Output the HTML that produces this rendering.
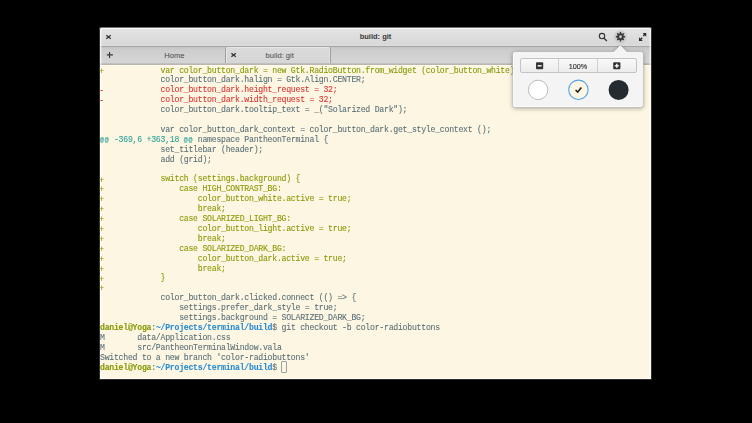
<!DOCTYPE html>
<html><head><meta charset="utf-8">
<style>
*{margin:0;padding:0;box-sizing:border-box}
html,body{width:752px;height:423px;background:#000;overflow:hidden}
body{position:relative;font-family:"Liberation Sans",sans-serif}
.a{position:absolute}
#win{left:99px;top:27px;width:553px;height:353px;background:#2e2e2e;border-radius:2.5px 2.5px 0 0;box-shadow:inset 0 1px 0 #6e6e6e}
#hdr{left:100px;top:28px;width:551px;height:18px;background:linear-gradient(#fbfbfb 0,#fbfbfb 1px,#e3e3e3 1px,#d8d8d8 16px,#dcdcdc 17px,#dcdcdc);border-radius:1.5px 1.5px 0 0}
#hline{left:100px;top:46px;width:551px;height:1px;background:#a6a6a6}
#tabs{left:100px;top:47px;width:551px;height:16px;background:linear-gradient(#c4c4c4,#cdcdcd 3px,#d1d1d1 8px,#d5d5d5)}
#tline{left:100px;top:63px;width:551px;height:2px;background:linear-gradient(#c0c0c0 0,#c0c0c0 1px,#b9b6ab 1px)}
#term{left:100px;top:65px;width:551px;height:314px;background:#fdf6e3;border-top:1px solid #fffbee}
#title{left:100px;top:27.2px;width:551px;text-align:center;font-weight:bold;font-size:7.5px;line-height:19px;color:#383838}
.tablabel{font-size:7.6px;color:#484848;line-height:16px;top:47.8px;white-space:pre}
#acttab{left:225px;top:47px;width:106px;height:16px;background:linear-gradient(#dadada,#d6d6d6);border-left:1px solid #a0a0a0;border-right:1px solid #a0a0a0;border-radius:2px 2px 0 0;box-shadow:inset 1px 1px 0 #e6e6e6,inset -1px 0 0 #e2e2e2}
#txt{left:100.3px;top:0;will-change:transform;font-family:"Liberation Mono",monospace;font-size:8.2px;letter-spacing:-0.258px;-webkit-text-stroke:0.08px;white-space:pre;color:#586e75}
.l{position:absolute;left:0;height:10px;line-height:10px}
.g{color:#859900}.r{color:#dc322f}.c{color:#2aa198}.b{color:#268bd2}.B{font-weight:bold}.pm{position:relative;left:-0.8px;top:1.2px}.mm{position:relative;left:-0.8px;top:0.6px}.at{font-size:6.6px;letter-spacing:0.695px;vertical-align:0.3px}
#cur{position:absolute;left:281px;top:361px;width:6px;height:12px;border:1px solid #9aa3a0;border-radius:1px}
#pop{left:513px;top:51px;width:131px;height:57px;background:#f5f5f5;border:1px solid #bdbdbd;border-radius:3px;box-shadow:0 1px 3px rgba(0,0,0,.25)}
#zbtn{left:520px;top:58px;width:117px;height:15px;border:1px solid #c4c4c4;border-radius:2px;background:linear-gradient(#f9f9f9,#ececec)}
.zdiv{top:59px;width:1px;height:13px;background:#cfcfcf}
#pct{left:559px;top:58.5px;width:38px;text-align:center;line-height:15px;font-size:7.3px;color:#262626;-webkit-text-stroke:0.1px #262626}
.circ{top:80px;width:20px;height:20px;border-radius:50%}
#hl{left:100px;top:28px;width:551px;height:351px;border-radius:1.5px 1.5px 0 0;box-shadow:inset 1px 0 0 rgba(255,255,255,.6),inset -1px 0 0 rgba(255,255,255,.6),inset 0 -1px 0 rgba(255,255,255,.7),inset 2px 0 0 rgba(255,255,255,.25),inset -2px 0 0 rgba(255,255,255,.25)}
</style></head><body>
<div class="a" id="win"></div>
<div class="a" id="hdr"></div>
<div class="a" id="hline"></div>
<div class="a" id="tabs"></div>
<div class="a" id="acttab"></div>
<div class="a" id="tline"></div>
<div class="a" id="term"></div>
<div class="a" id="hl"></div>
<div class="a" id="title">build: git</div>
<div class="a tablabel" style="left:164.3px">Home</div>
<div class="a tablabel" style="left:265.6px">build: git</div>
<svg class="a" style="left:100px;top:27px" width="551" height="37" viewBox="0 0 551 37">
  <path d="M6.3 8.2 L10.7 11.8 M10.7 8.2 L6.3 11.8" stroke="#333" stroke-width="1.25" fill="none"/>
  <rect x="9" y="25" width="1.1" height="6" fill="#333"/><rect x="6.8" y="27.2" width="6.1" height="1.3" fill="#3a3a3a"/>
  <path d="M131.4 26.2 L135.8 29.8 M135.8 26.2 L131.4 29.8" stroke="#333" stroke-width="1.25" fill="none"/>
  <circle cx="502" cy="9.1" r="2.7" stroke="#333" stroke-width="1.1" fill="none"/>
  <path d="M504 11.2 L506.9 13.9" stroke="#333" stroke-width="1.3"/>
  <circle cx="520.5" cy="9.9" r="6.6" fill="#cdcdcd"/>
  <path d="M539 10.2 V14 H542.8 Z M542.6 6 H546.2 V9.8 Z" fill="#2a2a2a"/>
  <path d="M540.3 12.7 L542.2 10.8 M545 7.2 L543.3 8.9" stroke="#2a2a2a" stroke-width="1.4"/>
</svg>
<svg class="a" style="left:100px;top:27px" width="551" height="37" viewBox="0 0 551 37"><path d="M523.81 8.96 L525.14 9.01 L525.14 10.49 L523.81 10.54 L523.40 11.53 L524.30 12.51 L523.26 13.55 L522.28 12.65 L521.29 13.06 L521.24 14.39 L519.76 14.39 L519.71 13.06 L518.72 12.65 L517.74 13.55 L516.70 12.51 L517.60 11.53 L517.19 10.54 L515.86 10.49 L515.86 9.01 L517.19 8.96 L517.60 7.97 L516.70 6.99 L517.74 5.95 L518.72 6.85 L519.71 6.44 L519.76 5.11 L521.24 5.11 L521.29 6.44 L522.28 6.85 L523.26 5.95 L524.30 6.99 L523.40 7.97 Z M521.90 9.75 A1.4 1.4 0 1 0 519.10 9.75 A1.4 1.4 0 1 0 521.90 9.75 Z" fill="#383838" fill-rule="evenodd"/></svg>
<div class="a" id="txt">
<div class="l" style="top:65.50px"><span class="g pm">+</span><span class="g">            var color_button_dark = new Gtk.RadioButton.from_widget (color_button_white);</span></div>
<div class="l" style="top:75.40px">             color_button_dark.halign = Gtk.Align.CENTER;</div>
<div class="l" style="top:85.30px"><span class="r mm">-</span><span class="r">            color_button_dark.height_request = 32;</span></div>
<div class="l" style="top:95.20px"><span class="r mm">-</span><span class="r">            color_button_dark.width_request = 32;</span></div>
<div class="l" style="top:105.10px">             color_button_dark.tooltip_text = _(&quot;Solarized Dark&quot;);</div>
<div class="l" style="top:115.00px"> </div>
<div class="l" style="top:124.90px">             var color_button_dark_context = color_button_dark.get_style_context ();</div>
<div class="l" style="top:134.80px"><span class="c at">@@</span><span class="c"> -369,6 +363,18 </span><span class="c at">@@</span> namespace PantheonTerminal {</div>
<div class="l" style="top:144.70px">             set_titlebar (header);</div>
<div class="l" style="top:154.60px">             add (grid);</div>
<div class="l" style="top:164.50px"> </div>
<div class="l" style="top:174.40px"><span class="g pm">+</span><span class="g">            switch (settings.background) {</span></div>
<div class="l" style="top:184.30px"><span class="g pm">+</span><span class="g">                case HIGH_CONTRAST_BG:</span></div>
<div class="l" style="top:194.20px"><span class="g pm">+</span><span class="g">                    color_button_white.active = true;</span></div>
<div class="l" style="top:204.10px"><span class="g pm">+</span><span class="g">                    break;</span></div>
<div class="l" style="top:214.00px"><span class="g pm">+</span><span class="g">                case SOLARIZED_LIGHT_BG:</span></div>
<div class="l" style="top:223.90px"><span class="g pm">+</span><span class="g">                    color_button_light.active = true;</span></div>
<div class="l" style="top:233.80px"><span class="g pm">+</span><span class="g">                    break;</span></div>
<div class="l" style="top:243.70px"><span class="g pm">+</span><span class="g">                case SOLARIZED_DARK_BG:</span></div>
<div class="l" style="top:253.60px"><span class="g pm">+</span><span class="g">                    color_button_dark.active = true;</span></div>
<div class="l" style="top:263.50px"><span class="g pm">+</span><span class="g">                    break;</span></div>
<div class="l" style="top:273.40px"><span class="g pm">+</span><span class="g">            }</span></div>
<div class="l" style="top:283.30px"><span class="g pm">+</span><span class="g"></span></div>
<div class="l" style="top:293.20px">             color_button_dark.clicked.connect (() =&gt; {</div>
<div class="l" style="top:303.10px">                 settings.prefer_dark_style = true;</div>
<div class="l" style="top:313.00px">                 settings.background = SOLARIZED_DARK_BG;</div>
<div class="l" style="top:322.90px"><span class="g B">daniel@Yoga</span>:<span class="b B">~/Projects/terminal/build</span>$ git checkout -b color-radiobuttons</div>
<div class="l" style="top:332.80px">M       data/Application.css</div>
<div class="l" style="top:342.70px">M       src/PantheonTerminalWindow.vala</div>
<div class="l" style="top:352.60px">Switched to a new branch &#x27;color-radiobuttons&#x27;</div>
<div class="l" style="top:362.50px"><span class="g B">daniel@Yoga</span>:<span class="b B">~/Projects/terminal/build</span>$ </div>

</div>

<div id="cur"></div>
<svg class="a" style="left:0;top:0;filter:drop-shadow(0 1px 2px rgba(0,0,0,.32))" width="752" height="423" viewBox="0 0 752 423">
  <path d="M515.5 51.5 H613.8 L620.3 45 L626.8 51.5 H640.5 Q643.5 51.5 643.5 54.5 V104.5 Q643.5 107.5 640.5 107.5 H515.5 Q512.5 107.5 512.5 104.5 V54.5 Q512.5 51.5 515.5 51.5 Z" fill="#f4f4f4" stroke="rgba(0,0,0,0.12)" stroke-width="1"/>
  <path d="M513.5 54 V104.5 Q513.5 106.5 515.5 106.5 H640.5" fill="none" stroke="#fbfbfb" stroke-width="1"/>
</svg>
<div class="a" id="zbtn"></div>
<div class="a zdiv" style="left:558px"></div>
<div class="a zdiv" style="left:597px"></div>
<div class="a" id="pct">100%</div>
<svg class="a" style="left:530px;top:58px" width="100" height="15" viewBox="0 0 100 15">
  <rect x="6" y="4.3" width="7.2" height="7" rx="1" fill="#333"/>
  <rect x="7.6" y="7.1" width="4" height="1.4" fill="#fff"/>
  <rect x="83.2" y="4.3" width="7.2" height="7" rx="1" fill="#333"/>
  <rect x="84.8" y="7.1" width="4" height="1.4" fill="#fff"/>
  <rect x="86.1" y="5.8" width="1.4" height="4" fill="#fff"/>
</svg>
<svg class="a" style="left:520px;top:75px" width="120" height="30" viewBox="0 0 120 30">
  <circle cx="18.15" cy="14.9" r="9.7" fill="#fff" stroke="#b4b4b4" stroke-width="0.9"/>
  <circle cx="58.4" cy="14.8" r="9.7" fill="#fdf6e3" stroke="#52a2ea" stroke-width="1.1"/>
  <path d="M55.6 15 L57.7 17.1 L61.4 12.6" stroke="#222" stroke-width="1.6" fill="none"/>
  <circle cx="98.6" cy="14.9" r="10" fill="#252c31"/>
</svg>
</body></html>
